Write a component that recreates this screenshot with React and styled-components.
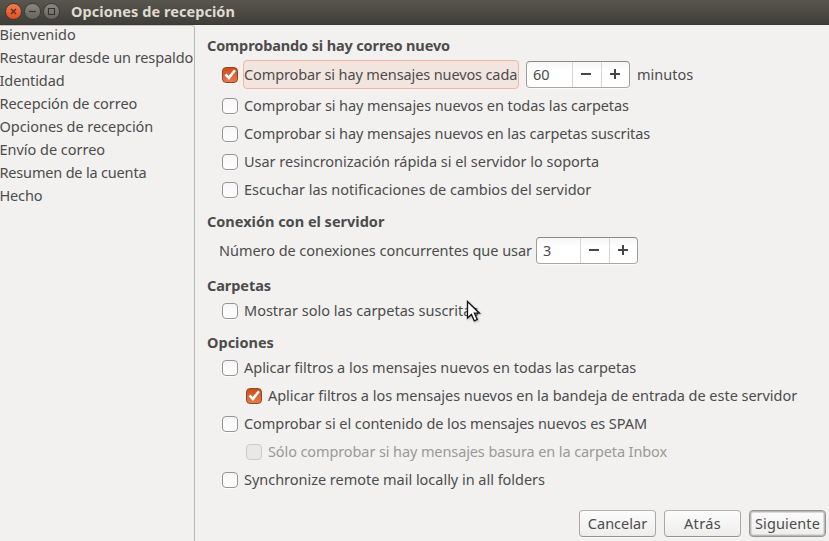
import React from 'react';
import styled, { createGlobalStyle, css } from 'styled-components';

const GlobalStyle = createGlobalStyle`
  * { box-sizing: border-box; }
  body {
    margin: 0;
    background: #f2f1f0;
    color: #4c4c4c;
    font-family: "Noto Sans", "Open Sans", sans-serif;
    font-size: 14.5px;
    overflow: hidden;
  }
`;

const Window = styled.div`
  display: flex;
  flex-direction: column;
  width: 829px;
  height: 541px;
  background: #f2f1f0;
`;

const TitleBar = styled.header`
  display: flex;
  align-items: center;
  flex: none;
  height: 25px;
  padding: 0 0 2px 5px;
  background: linear-gradient(#59564e, #403e39);
  border-bottom: 1px solid #3a3934;
`;

const WindowButtons = styled.div`
  display: flex;
  gap: 2px;
  margin-right: 11px;
`;

const WindowButton = styled.span`
  display: flex;
  width: 17px;
  height: 17px;
  border-radius: 50%;
  border: 1px solid #3b3a35;
  background: ${(p) => (p.$close ? 'linear-gradient(#f37b50, #e2501f)' : 'linear-gradient(#8a887f, #65635b)')};
  svg { width: 15px; height: 15px; display: block; }
`;

const Title = styled.h1`
  margin: 0;
  font-size: 14.5px;
  line-height: 20px;
  font-weight: 700;
  letter-spacing: 0.06px;
  color: #dfdbd2;
  white-space: nowrap;
`;

const Body = styled.div`
  display: flex;
  flex: 1;
  min-height: 0;
`;

const Sidebar = styled.nav`
  flex: none;
  width: 195px;
  border-top: 1px solid #c8c5c1;
  border-right: 1px solid #bdbab6;
  border-top-right-radius: 3px;
  overflow: hidden;
`;

const Step = styled.div`
  height: 23px;
  line-height: 23px;
  margin-top: ${(p) => (p.$first ? '-3px' : '0')};
  margin-left: -0.5px;
  letter-spacing: ${(p) => p.$track || 0}px;
  white-space: nowrap;
`;

const Main = styled.main`
  display: flex;
  flex-direction: column;
  flex: 1;
  padding: 11px 3px 4px 12px;
`;

const Section = styled.section`
  margin-bottom: ${(p) => p.$gap}px;
`;

const Heading = styled.h2`
  margin: 0 0 ${(p) => p.$gap}px;
  font-size: 14.5px;
  font-weight: 700;
  line-height: 18px;
  height: 20px;
  letter-spacing: ${(p) => p.$track || 0}px;
  white-space: nowrap;
`;

const Row = styled.div`
  display: flex;
  align-items: center;
  height: ${(p) => p.$height || 28}px;
  margin-bottom: ${(p) => p.$gap || 0}px;
  padding-left: ${(p) => p.$indent ?? 15}px;
`;

const Box = styled.span`
  flex: none;
  width: 16px;
  height: 16px;
  margin-right: 5px;
  border: 1px solid #979593;
  border-radius: 4px;
  background: linear-gradient(#f6f6f6, #ffffff);
  box-shadow: 0 1px 0 #fbfbfb;
  svg { display: block; width: 14px; height: 14px; }
  ${(p) => p.$checked && css`
    border-color: #9d431f;
    background: linear-gradient(#cb4c1b, #e57b50);
  `}
  ${(p) => p.$disabled && css`
    border-color: #cbcac8;
    background: #e9e8e7;
    box-shadow: none;
  `}
`;

const Label = styled.span`
  height: 20px;
  line-height: 18px;
  padding-left: ${(p) => (p.$flush ? 0 : 1)}px;
  letter-spacing: ${(p) => p.$track || 0}px;
  white-space: nowrap;
  color: ${(p) => (p.$disabled ? '#9a9996' : 'inherit')};
  ${(p) => p.$focused && css`
    width: 276px;
    height: 29px;
    padding-left: 0;
    line-height: 27px;
    border: 1px solid #f3b59f;
    border-radius: 4px;
    background: #f2e4df;
  `}
`;

const Spin = styled.div`
  display: grid;
  flex: none;
  grid-template-columns: ${(p) => p.$entry}px 29px 28px;
  height: 27px;
  margin: 0 6px 0 auto;
  margin-left: ${(p) => p.$offset}px;
  border: 1px solid;
  border-color: #8b8988 #9f9d9b #a9a7a5;
  border-radius: 4px;
  background: linear-gradient(#f7f7f7, #ffffff 40%);
  box-shadow: 0 1px 0 #fafafa;
`;

const SpinValue = styled.span`
  padding-left: 6px;
  line-height: 25px;
`;

const SpinButton = styled.span`
  display: flex;
  border-left: 1px solid #d6d4d2;
  svg { width: 27px; height: 25px; display: block; }
`;

const Actions = styled.footer`
  display: flex;
  justify-content: flex-end;
  gap: 8px;
  margin-top: auto;
`;

const Button = styled.button`
  width: 77px;
  height: 27px;
  padding: 0;
  border: 1px solid;
  border-color: #b3b0ad #aaa7a4 #969390;
  border-radius: 4px;
  background: linear-gradient(#fcfcfc, #ededec);
  box-shadow: 0 1px 0 #f9f9f9;
  color: #4c4c4c;
  font: inherit;
  line-height: 25px;
  letter-spacing: ${(p) => p.$track || 0}px;
  white-space: nowrap;
  ${(p) => p.$default && css`
    border-color: #979491;
    box-shadow: inset 0 0 0 1px #b9b7b5, inset 0 0 0 2px #dcdbd9;
  `}
`;

const Pointer = styled.svg`
  position: absolute;
  left: 466px;
  top: 300px;
  width: 16px;
  height: 24px;
  filter: drop-shadow(1px 1px 1px rgba(0, 0, 0, 0.25));
`;

const CheckMark = () => (
  <svg viewBox="0 0 14 14">
    <path d="M1.6 7.2 3.6 5.6 5.6 8.1 11 1.6 12.9 2.9 6 12Z" fill="#fff" />
  </svg>
);

function CheckRow({ text, track, checked, disabled, focused, children, ...row }) {
  return (
    <Row $indent={row.indent} $height={row.height} $gap={row.gap}>
      <Box $checked={checked} $disabled={disabled}>{checked && <CheckMark />}</Box>
      <Label $track={track} $disabled={disabled} $focused={focused}>{text}</Label>
      {children}
    </Row>
  );
}

function SpinBox({ value, entry, offset }) {
  return (
    <Spin $entry={entry} $offset={offset}>
      <SpinValue>{value}</SpinValue>
      <SpinButton><svg viewBox="0 0 27 25"><path d="M8 12H18" stroke="#474747" strokeWidth="2" /></svg></SpinButton>
      <SpinButton><svg viewBox="0 0 27 25"><path d="M8 12H18M13 7V17" stroke="#474747" strokeWidth="2" /></svg></SpinButton>
    </Spin>
  );
}

const steps = [
  ['Bienvenido', 0],
  ['Restaurar desde un respaldo', -0.08],
  ['Identidad', -0.1],
  ['Recepción de correo', -0.05],
  ['Opciones de recepción', -0.05],
  ['Envío de correo', -0.02],
  ['Resumen de la cuenta', -0.18],
  ['Hecho', -0.15],
];

export default function App() {
  return (
    <Window>
      <GlobalStyle />
      <TitleBar>
        <WindowButtons>
          <WindowButton $close>
            <svg viewBox="0 0 15 15"><path d="M5 5 10 10M10 5 5 10" stroke="#57301f" strokeWidth="1.4" /></svg>
          </WindowButton>
          <WindowButton>
            <svg viewBox="0 0 15 15"><path d="M4 7.5H11" stroke="#35342f" strokeWidth="1.2" /></svg>
          </WindowButton>
          <WindowButton>
            <svg viewBox="0 0 15 15"><path d="M4.5 4.5H10.5V10.5H4.5Z" fill="none" stroke="#35342f" strokeWidth="1.1" /></svg>
          </WindowButton>
        </WindowButtons>
        <Title>Opciones de recepción</Title>
      </TitleBar>
      <Body>
        <Sidebar>
          {steps.map(([name, track], i) => (
            <Step key={name} $track={track} $first={i === 0}>{name}</Step>
          ))}
        </Sidebar>
        <Main>
          <Section $gap={8}>
            <Heading $gap={4} $track={-0.13}>Comprobando si hay correo nuevo</Heading>
            <CheckRow text="Comprobar si hay mensajes nuevos cada" track={-0.12} checked focused height={29} gap={3}>
              <SpinBox value="60" entry={45} offset={7} />
              <Label>minutos</Label>
            </CheckRow>
            <CheckRow text="Comprobar si hay mensajes nuevos en todas las carpetas" track={-0.08} />
            <CheckRow text="Comprobar si hay mensajes nuevos en las carpetas suscritas" track={-0.085} />
            <CheckRow text="Usar resincronización rápida si el servidor lo soporta" track={-0.025} />
            <CheckRow text="Escuchar las notificaciones de cambios del servidor" track={0} />
          </Section>
          <Section $gap={12}>
            <Heading $gap={5}>Conexión con el servidor</Heading>
            <Row $indent={12} $height={27}>
              <Label $flush $track={-0.045}>Número de conexiones concurrentes que usar</Label>
              <SpinBox value="3" entry={43} offset={4} />
            </Row>
          </Section>
          <Section $gap={8}>
            <Heading $gap={1} $track={-0.07}>Carpetas</Heading>
            <CheckRow text="Mostrar solo las carpetas suscritas" />
          </Section>
          <Section $gap={0}>
            <Heading $gap={1}>Opciones</Heading>
            <CheckRow text="Aplicar filtros a los mensajes nuevos en todas las carpetas" track={-0.02} />
            <CheckRow text="Aplicar filtros a los mensajes nuevos en la bandeja de entrada de este servidor" track={-0.035} indent={39} checked />
            <CheckRow text="Comprobar si el contenido de los mensajes nuevos es SPAM" track={-0.064} />
            <CheckRow text="Sólo comprobar si hay mensajes basura en la carpeta Inbox" track={-0.105} indent={39} disabled />
            <CheckRow text="Synchronize remote mail locally in all folders" track={-0.025} />
          </Section>
          <Actions>
            <Button>Cancelar</Button>
            <Button $track={0.34}>Atrás</Button>
            <Button $default $track={0.125}>Siguiente</Button>
          </Actions>
        </Main>
      </Body>
      <Pointer viewBox="0 0 16 24">
        <path d="M1.5 1.5V18L5.4 14.4 8.3 20.8 11.3 19.5 8.4 13.2H13.4Z" fill="#fff" stroke="#111" strokeWidth="1.3" />
      </Pointer>
    </Window>
  );
}
